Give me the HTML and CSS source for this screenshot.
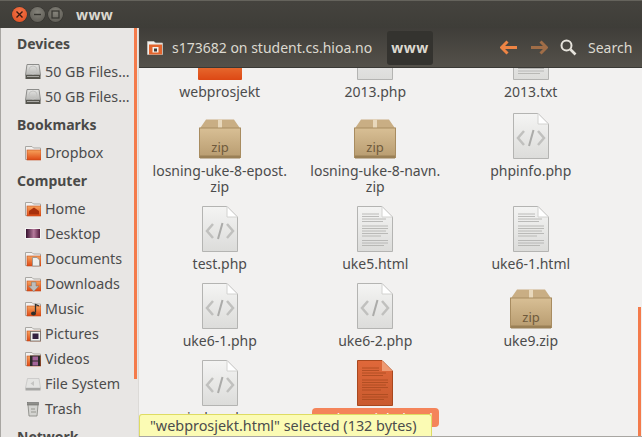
FILE: index.html
```html
<!DOCTYPE html>
<html lang="en">
<head>
    <meta charset="UTF-8">
    <meta name="viewport" content="width=device-width, initial-scale=1.0">
    <title>www</title>
    <link rel="stylesheet" href="styles.css">
</head>
<body>
    <!-- shared icons -->
    <svg class="defs" width="0" height="0" aria-hidden="true">
        <defs>
            <linearGradient id="pageFill" x1="0" y1="0" x2="0" y2="1">
                <stop offset="0" stop-color="#f4f4f3"/>
                <stop offset="1" stop-color="#dcdcda"/>
            </linearGradient>
            <linearGradient id="boxFill" x1="0" y1="0" x2="0" y2="1">
                <stop offset="0" stop-color="#d8bf95"/>
                <stop offset="1" stop-color="#b89c70"/>
            </linearGradient>
            <linearGradient id="folderFill" x1="0" y1="0" x2="0" y2="1">
                <stop offset="0" stop-color="#f7a35c"/>
                <stop offset="1" stop-color="#dd4814"/>
            </linearGradient>
            <linearGradient id="orangeDoc" x1="0" y1="0" x2="0" y2="1">
                <stop offset="0" stop-color="#e0683a"/>
                <stop offset="1" stop-color="#c95a2e"/>
            </linearGradient>
            <linearGradient id="driveFill" x1="0" y1="0" x2="0" y2="1">
                <stop offset="0" stop-color="#e6e6e4"/>
                <stop offset="1" stop-color="#b5b5b2"/>
            </linearGradient>
            <linearGradient id="wallFill" x1="0" y1="0" x2="1" y2="0">
                <stop offset="0" stop-color="#2c0a26"/>
                <stop offset="0.55" stop-color="#b77a9c"/>
                <stop offset="1" stop-color="#4a1436"/>
            </linearGradient>

            <symbol id="code-file" viewBox="0 0 36 46">
                <path d="M.5.5H25L35.5 11V45.500H.5Z" fill="url(#pageFill)" stroke="#b4b4b2"/>
                <path d="M25 .5V11H35.500Z" fill="#fff" stroke="#d2d2d0"/>
                <path d="M11 18L5 25L11 32M25 18L31 25L25 32" fill="none" stroke="#c0c0be" stroke-width="2.500"/>
                <path d="M20.500 17L16 33" fill="none" stroke="#ababa9" stroke-width="2"/>
            </symbol>

            <symbol id="text-file" viewBox="0 0 36 46">
                <path d="M.5.5H25L35.500 11V45.500H.5Z" fill="url(#pageFill)" stroke="#b4b4b2"/>
                <path d="M25 .5V11H35.500Z" fill="#fff" stroke="#d2d2d0"/>
                <path d="M5 8H22M5 10.500H22M5 13H29M5 15.500H26M5 20H31M5 22.500H31M5 25H29M5 27.500H31M5 30H24M5 34.500H31M5 37H31M5 39.500H27" fill="none" stroke="#adadab" stroke-width=".8"/>
            </symbol>

            <symbol id="zip-box" viewBox="0 0 42 40">
                <path d="M7 .5H35L41.500 10H.5Z" fill="#c9ae84"/>
                <rect x="19" y=".5" width="4" height="14" fill="#e8d8bc"/>
                <rect x=".5" y="9" width="41" height="29.500" fill="url(#boxFill)" stroke="#a88c60"/>
                <rect x="1" y="36.500" width="40" height="3" fill="#9a8056"/>
                <text x="21" y="33" class="zip-text">zip</text>
            </symbol>

            <symbol id="folder" viewBox="0 0 16 16">
                <path d="M.5 1.500H7L8.500 3H15.500V14.500H.5Z" fill="#f2f1ef" stroke="#a9a7a3"/>
                <rect x="2" y="5" width="14" height="10" fill="url(#folderFill)" stroke="#c24c1c" stroke-width=".6"/>
            </symbol>

            <symbol id="drive" viewBox="0 0 16 16">
                <path d="M2 .5H14L15.500 11H.5Z" fill="url(#driveFill)" stroke="#8c8c8a"/>
                <circle cx="8" cy="6" r="4" fill="none" stroke="#c4c4c2"/>
                <rect x=".5" y="11" width="15" height="4" fill="#57564f"/>
                <rect x="2" y="12" width="12" height="1" fill="#a8a7a3"/>
            </symbol>
        </defs>
    </svg>

    <div class="window">
        <header class="titlebar">
            <div class="window-buttons">
                <span class="win-btn win-close">
                    <svg width="9" height="9" viewBox="0 0 9 9"><path d="M1.500 1.500L7.500 7.500M7.500 1.500L1.500 7.500" stroke="#3b1a10" stroke-width="1.400"/></svg>
                </span>
                <span class="win-btn">
                    <svg width="9" height="9" viewBox="0 0 9 9"><path d="M1 4.500H8" stroke="#35342f" stroke-width="1.400"/></svg>
                </span>
                <span class="win-btn">
                    <svg width="9" height="9" viewBox="0 0 9 9"><rect x="1" y="1" width="7" height="7" fill="none" stroke="#35342f" stroke-width="1.200"/></svg>
                </span>
            </div>
            <div class="window-title">www</div>
        </header>

        <div class="panes">
            <nav class="sidebar">
                <h3>Devices</h3>
                <div class="place"><svg class="place-icon"><use href="#drive"/></svg>50 GB Files…</div>
                <div class="place"><svg class="place-icon"><use href="#drive"/></svg>50 GB Files…</div>

                <h3>Bookmarks</h3>
                <div class="place"><svg class="place-icon"><use href="#folder"/></svg>Dropbox</div>

                <h3>Computer</h3>
                <div class="place">
                    <svg class="place-icon" viewBox="0 0 16 16"><use href="#folder"/><path d="M4 10L9 6.500L14 10V13.500H4Z" fill="#a8300c"/></svg>Home
                </div>
                <div class="place">
                    <svg class="place-icon" viewBox="0 0 16 16"><rect x=".5" y="2.500" width="15" height="10" fill="url(#wallFill)" stroke="#f4f4f2"/></svg>Desktop
                </div>
                <div class="place">
                    <svg class="place-icon" viewBox="0 0 16 16"><use href="#folder"/><path d="M7.500 6.500H12L14.500 9V15H7.500Z" fill="#eeeeec" stroke="#8f8f8d" stroke-width=".8"/></svg>Documents
                </div>
                <div class="place">
                    <svg class="place-icon" viewBox="0 0 16 16"><use href="#folder"/><path d="M6.500 6H11V10H14L8.800 15.500L3.500 10H6.500Z" fill="#bdbdba" stroke="#77766f" stroke-width=".5"/></svg>Downloads
                </div>
                <div class="place">
                    <svg class="place-icon" viewBox="0 0 16 16"><use href="#folder"/><path d="M10.500 11.500V3.500L14 5" fill="none" stroke="#2f2e2a" stroke-width="1.300"/><ellipse cx="8.500" cy="12.500" rx="2.500" ry="2" fill="#2f2e2a"/></svg>Music
                </div>
                <div class="place">
                    <svg class="place-icon" viewBox="0 0 16 16"><use href="#folder"/><rect x="5.500" y="5.500" width="10" height="9.500" fill="#f0f0ee" stroke="#6f6e6a" stroke-width=".8"/><rect x="7.500" y="7.500" width="6" height="5.500" fill="#33213f"/></svg>Pictures
                </div>
                <div class="place">
                    <svg class="place-icon" viewBox="0 0 16 16"><use href="#folder"/><rect x="5" y="4.500" width="10.500" height="10.500" fill="#2d2b28"/><rect x="7.500" y="5.500" width="5.500" height="4" fill="#a3649a"/><rect x="7.500" y="10.500" width="5.500" height="4" fill="#a3649a"/></svg>Videos
                </div>
                <div class="place">
                    <svg class="place-icon" viewBox="0 0 16 16"><path d="M2.500 2.500H14L15.500 12H.5Z" fill="#e4e4e2" stroke="#c2c2c0" stroke-width=".7"/><path d="M5.500 7.500L9 5V10Z" fill="#c4c4c2"/><rect x=".5" y="12" width="15" height="2.500" fill="#a6a6a4"/></svg>File System
                </div>
                <div class="place">
                    <svg class="place-icon" viewBox="0 0 16 16"><rect x="2.500" y="1.500" width="11" height="2.500" fill="#8f8f8b" stroke="#6c6c69" stroke-width=".6"/><path d="M3 4H13L12 15H4Z" fill="#d4d4d1" stroke="#84847f" stroke-width=".8"/><path d="M6 8H10M6 11H11" stroke="#96968f"/></svg>Trash
                </div>

                <h3>Network</h3>
            </nav>

            <div class="sash"><span class="sash-thumb"></span></div>

            <main class="content">
                <div class="toolbar">
                    <div class="path-item">
                        <svg class="path-icon" width="16" height="16" viewBox="0 0 16 16"><path d="M.5 1.500H7L8.500 3H15.500V14.500H.5Z" fill="#f0efec" stroke="#c9c7c2" stroke-width=".7"/><rect x="2" y="4.500" width="13" height="10" fill="#e2642d"/><rect x="5.500" y="7" width="6" height="5.500" fill="#f2f1ee"/><rect x="7" y="8.500" width="3" height="3" fill="#3c3b37"/></svg>
                        <span>s173682 on student.cs.hioa.no</span>
                    </div>
                    <div class="path-current">www</div>
                    <div class="nav-arrows">
                        <svg width="18" height="15" viewBox="0 0 18 15"><path d="M7.500 1.500L1.500 7.500L7.500 13.500M2 7.500H17" fill="none" stroke="#ee8444" stroke-width="3"/></svg>
                        <svg width="18" height="15" viewBox="0 0 18 15"><path d="M10.500 1.500L16.500 7.500L10.500 13.500M16 7.500H1" fill="none" stroke="#a06d47" stroke-width="3"/></svg>
                    </div>
                    <svg class="search-icon" width="17" height="17" viewBox="0 0 17 17"><circle cx="6.500" cy="6.500" r="5" fill="none" stroke="#e6e3dc" stroke-width="2"/><path d="M10.500 10.500L15.500 15.500" stroke="#e6e3dc" stroke-width="2.600"/></svg>
                    <span class="search-label">Search</span>
                </div>

                <div class="view">
                    <div class="file-grid">
                        <div class="file">
                            <div class="file-icon"><svg width="44" height="36" viewBox="0 0 44 36"><rect x="0" y="0" width="44" height="36" rx="1" fill="url(#folderFill)"/></svg></div>
                            <div class="file-name">webprosjekt</div>
                        </div>
                        <div class="file">
                            <div class="file-icon"><svg width="36" height="46"><use href="#code-file"/></svg></div>
                            <div class="file-name">2013.php</div>
                        </div>
                        <div class="file">
                            <div class="file-icon"><svg width="36" height="46"><use href="#text-file"/></svg></div>
                            <div class="file-name">2013.txt</div>
                        </div>

                        <div class="file">
                            <div class="file-icon"><svg width="42" height="40"><use href="#zip-box"/></svg></div>
                            <div class="file-name">losning-uke-8-epost.<br>zip</div>
                        </div>
                        <div class="file">
                            <div class="file-icon"><svg width="42" height="40"><use href="#zip-box"/></svg></div>
                            <div class="file-name">losning-uke-8-navn.<br>zip</div>
                        </div>
                        <div class="file">
                            <div class="file-icon"><svg width="36" height="46"><use href="#code-file"/></svg></div>
                            <div class="file-name">phpinfo.php</div>
                        </div>

                        <div class="file">
                            <div class="file-icon"><svg width="36" height="46"><use href="#code-file"/></svg></div>
                            <div class="file-name">test.php</div>
                        </div>
                        <div class="file">
                            <div class="file-icon"><svg width="36" height="46"><use href="#text-file"/></svg></div>
                            <div class="file-name">uke5.html</div>
                        </div>
                        <div class="file">
                            <div class="file-icon"><svg width="36" height="46"><use href="#text-file"/></svg></div>
                            <div class="file-name">uke6-1.html</div>
                        </div>

                        <div class="file">
                            <div class="file-icon"><svg width="36" height="46"><use href="#code-file"/></svg></div>
                            <div class="file-name">uke6-1.php</div>
                        </div>
                        <div class="file">
                            <div class="file-icon"><svg width="36" height="46"><use href="#code-file"/></svg></div>
                            <div class="file-name">uke6-2.php</div>
                        </div>
                        <div class="file">
                            <div class="file-icon"><svg width="42" height="40"><use href="#zip-box"/></svg></div>
                            <div class="file-name">uke9.zip</div>
                        </div>

                        <div class="file">
                            <div class="file-icon"><svg width="36" height="46"><use href="#code-file"/></svg></div>
                            <div class="file-name">index.php</div>
                        </div>
                        <div class="file">
                            <div class="file-icon">
                                <svg width="36" height="46" viewBox="0 0 36 46">
                                    <path d="M.5.5H25L35.500 11V45.500H.5Z" fill="url(#orangeDoc)" stroke="#a8481f"/>
                                    <path d="M25 .5V11H35.500Z" fill="#ee9a72"/>
                                    <path d="M5 8H22M5 10.500H22M5 13H29M5 15.500H26M5 20H31M5 22.500H31M5 25H29M5 27.500H31M5 30H24M5 34.500H31M5 37H31M5 39.500H27" fill="none" stroke="#a84a20" stroke-width=".8"/>
                                </svg>
                            </div>
                            <div class="file-name file-selected">webprosjekt.html</div>
                        </div>
                    </div>

                    <div class="view-scroll"></div>
                    <div class="status-tip">"webprosjekt.html" selected (132 bytes)</div>
                </div>
            </main>
        </div>
    </div>
</body>
</html>
```

FILE: styles.css
```css
html, body {
    margin: 0;
    padding: 0;
    height: 100%;
    overflow: hidden;
}

body {
    font-family: "Noto Sans", "Open Sans", sans-serif;
    font-size: 14px;
    color: #4c4c4c;
    background-color: #3c3b37;
}

.defs {
    position: absolute;
}

.zip-text {
    font-family: "Noto Sans", sans-serif;
    font-size: 13px;
    fill: #6e5a3c;
    text-anchor: middle;
}

.window {
    width: 642px;
    height: 437px;
    display: flex;
    flex-direction: column;
    overflow: hidden;
}

.titlebar {
    height: 28px;
    flex: none;
    display: flex;
    align-items: center;
    padding-left: 12px;
    padding-bottom: 1px;
    box-sizing: border-box;
    border-top: 1px solid #65635c;
    background: linear-gradient(#45433e, #3e3d38);
}

.window-buttons {
    display: flex;
    gap: 3px;
}

.win-btn {
    width: 15px;
    height: 15px;
    border-radius: 50%;
    display: flex;
    align-items: center;
    justify-content: center;
    background: radial-gradient(circle at 50% 35%, #85837b, #56544d);
    box-shadow: 0 0 0 .5px #33322e;
}

.win-close {
    background: radial-gradient(circle at 50% 35%, #f5764a, #dc4a1d);
}

.window-title {
    margin-left: 13px;
    font-weight: 700;
    font-size: 14px;
    letter-spacing: .4px;
    color: #dcd9d0;
}

.panes {
    flex: 1;
    display: flex;
    min-height: 0;
}

.sidebar {
    width: 133px;
    flex: none;
    border-left: 1px solid #a8a6a2;
    background-color: #e8e6e4;
    overflow: hidden;
    white-space: nowrap;
}

.sidebar h3 {
    margin: 3px 0;
    padding-left: 16px;
    height: 25px;
    line-height: 25px;
    font-size: 14px;
    font-weight: 700;
    color: #4a4a48;
}

.place {
    height: 25px;
    display: flex;
    align-items: center;
    padding-left: 24px;
    font-size: 14.3px;
    color: #4c4c4c;
}

.place-icon {
    width: 16px;
    height: 16px;
    flex: none;
    margin-right: 4px;
}

.sash {
    width: 4px;
    flex: none;
    background-color: #e8e6e4;
    border-right: 1px solid #dcdad7;
}

.sash-thumb {
    display: block;
    width: 3px;
    height: 351px;
    background-color: #f47b4b;
}

.content {
    flex: 1;
    min-width: 0;
    display: flex;
    flex-direction: column;
}

.toolbar {
    height: 40px;
    flex: none;
    display: flex;
    align-items: center;
    box-sizing: border-box;
    padding-left: 8px;
    border-bottom: 1px solid #3a3935;
    background: linear-gradient(#3f3d39, #54514a);
    color: #dcd9d0;
}

.path-item {
    display: flex;
    align-items: center;
    width: 240px;
    flex: none;
    white-space: nowrap;
}

.path-icon {
    margin-right: 9px;
}

.path-current {
    width: 46px;
    height: 34px;
    line-height: 34px;
    flex: none;
    text-align: center;
    font-weight: 700;
    letter-spacing: .5px;
    border-radius: 3px;
    background-color: #34332f;
    color: #dcd9d0;
}

.nav-arrows {
    display: flex;
    gap: 12px;
    margin-left: 67px;
}

.search-icon {
    margin-left: 12px;
}

.search-label {
    margin-left: 11px;
}

.view {
    flex: 1;
    min-height: 0;
    position: relative;
    overflow: hidden;
    background-color: #f2f1f0;
    border-bottom: 1px solid #a8a6a2;
}

.file-grid {
    display: grid;
    grid-template-columns: repeat(3, 155.5px);
    grid-template-rows: 79px 93px 77px 77px 77px;
    margin: -36px 0 0 3px;
}

.file {
    display: flex;
    flex-direction: column;
    align-items: center;
    text-align: center;
}

.file-icon {
    height: 48px;
    display: flex;
    align-items: flex-end;
    justify-content: center;
    flex: none;
}

.file-name {
    margin-top: 4px;
    line-height: 16px;
    color: #4c4c4c;
}

.file-selected {
    margin-top: 2px;
    padding: 3px 6px 0;
    border-radius: 4px;
    background-color: #f4845a;
    color: #fff;
}

.view-scroll {
    position: absolute;
    right: 1px;
    top: 239px;
    bottom: 0;
    width: 3px;
    background-color: #f47b4b;
}

.status-tip {
    position: absolute;
    left: 0;
    bottom: 0;
    width: 293px;
    height: 22px;
    line-height: 21px;
    box-sizing: border-box;
    padding-left: 10px;
    font-size: 14.400px;
    white-space: nowrap;
    border: 1px solid #dedc62;
    border-bottom: none;
    border-radius: 3px 3px 0 0;
    background-color: #fbfbb4;
    color: #4c4c4c;
}
```
